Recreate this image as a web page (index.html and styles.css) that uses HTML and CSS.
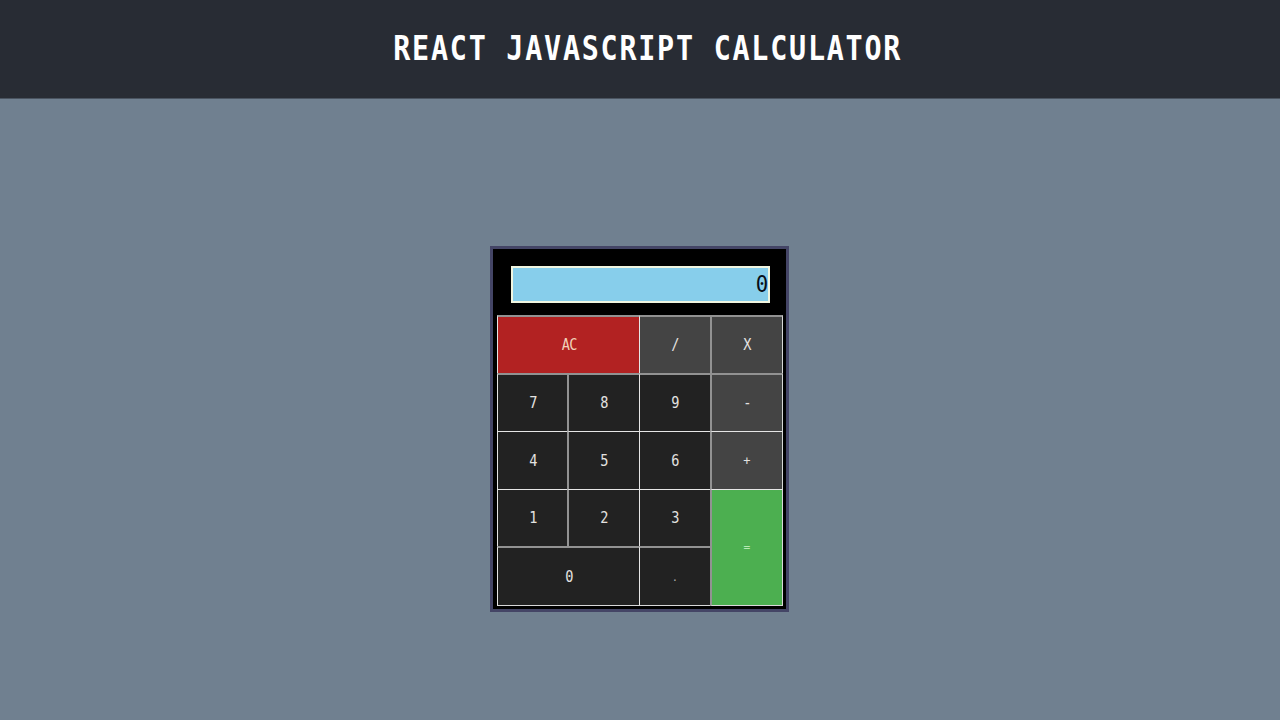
FILE: index.html
```html
<!DOCTYPE html>
<html lang="en">
<head>
<meta charset="utf-8">
<title>React JavaScript Calculator</title>
<link rel="stylesheet" href="styles.css">
</head>
<body>
<header class="header"><h1 class="title">REACT JAVASCRIPT CALCULATOR</h1></header>
<main class="main">
  <section class="calculator">
    <div class="display"><span class="value">0</span></div>
    <div class="keys">
      <button class="key clear wide soft-top"><span>AC</span></button>
      <button class="key op soft-top"><span>/</span></button>
      <button class="key op soft-top soft-left last"><span>X</span></button>
      <button class="key soft-top"><span>7</span></button>
      <button class="key soft-top soft-left"><span>8</span></button>
      <button class="key soft-top"><span>9</span></button>
      <button class="key op soft-top soft-left last"><span>-</span></button>
      <button class="key"><span>4</span></button>
      <button class="key soft-left"><span>5</span></button>
      <button class="key"><span>6</span></button>
      <button class="key op soft-left last"><span class="plus">+</span></button>
      <button class="key"><span>1</span></button>
      <button class="key soft-left"><span>2</span></button>
      <button class="key"><span>3</span></button>
      <button class="key equals soft-left last bottom"><span>=</span></button>
      <button class="key wide soft-top bottom"><span>0</span></button>
      <button class="key soft-top bottom"><span class="dot">.</span></button>
    </div>
  </section>
</main>
</body>
</html>
```
FILE: styles.css
```css
* { box-sizing: border-box; }
body {
  margin: 0;
  height: 100vh;
  display: flex;
  flex-direction: column;
  background: #708090;
  overflow: hidden;
  font-family: "DejaVu Sans Mono", "Liberation Mono", monospace;
}
.header {
  height: 99px;
  flex: none;
  display: flex;
  justify-content: center;
  padding: 28px 0 0 15px;
  background: #282c34;
  border-bottom: 1px solid #4a5460;
}
.title {
  margin: 0;
  color: #fff;
  font-size: 34px;
  line-height: 40px;
  font-weight: bold;
  white-space: pre;
  letter-spacing: 2.1px;
  transform: scaleX(.835);
}
.main {
  display: flex;
  flex-direction: column;
  align-items: center;
  padding-top: 147px;
}
.calculator {
  width: 299px;
  height: 366px;
  border: 3px solid #444566;
  background: #000;
  padding: 17px 3px 0 4px;
  margin-left: -1px;
}
.display {
  width: 259px;
  height: 37px;
  margin: 0 0 12px 14px;
  border: 2px solid #f0f5e0;
  background: #87ceeb;
  display: flex;
  justify-content: flex-end;
  align-items: center;
}
.value {
  font-size: 23px;
  line-height: 28px;
  color: #071018;
  transform: scaleX(.9);
  margin: 0 -1px 2px 0;
}
.keys {
  display: grid;
  width: 286px;
  grid-template-columns: 70px 72px 71px 73px;
  grid-template-rows: 58px 58px 58px 57px 60px;
}
.key {
  margin: 0;
  padding: 0;
  border: 0 solid #e6e6e6;
  border-top-width: 1px;
  border-left-width: 1px;
  background: #222;
  color: #e4e2e0;
  font: 16px/18px "DejaVu Sans Mono", "Liberation Mono", monospace;
  display: flex;
  align-items: center;
  justify-content: center;
}
.key span { transform: translateX(.5px) scaleX(.85); }
.wide { grid-column: span 2; }
.op { background: #444; }
.clear { background: #b22222; color: #f0d0b8; letter-spacing: -1px; }
.equals { background: #4caf50; grid-row: span 2; color: #b8eab4; }
.key.equals span { transform: scale(.7, .6); }
.soft-top { border-top: 2px solid #929292; }
.soft-left { border-left: 2px solid #929292; }
.last { border-right: 1px solid #d8d8d8; }
.bottom { border-bottom: 1px solid #d8d8d8; }
.key .plus { transform: scale(.75); }
.key .dot { transform: translateY(1px) scale(.65); color: #aaa; }
```
